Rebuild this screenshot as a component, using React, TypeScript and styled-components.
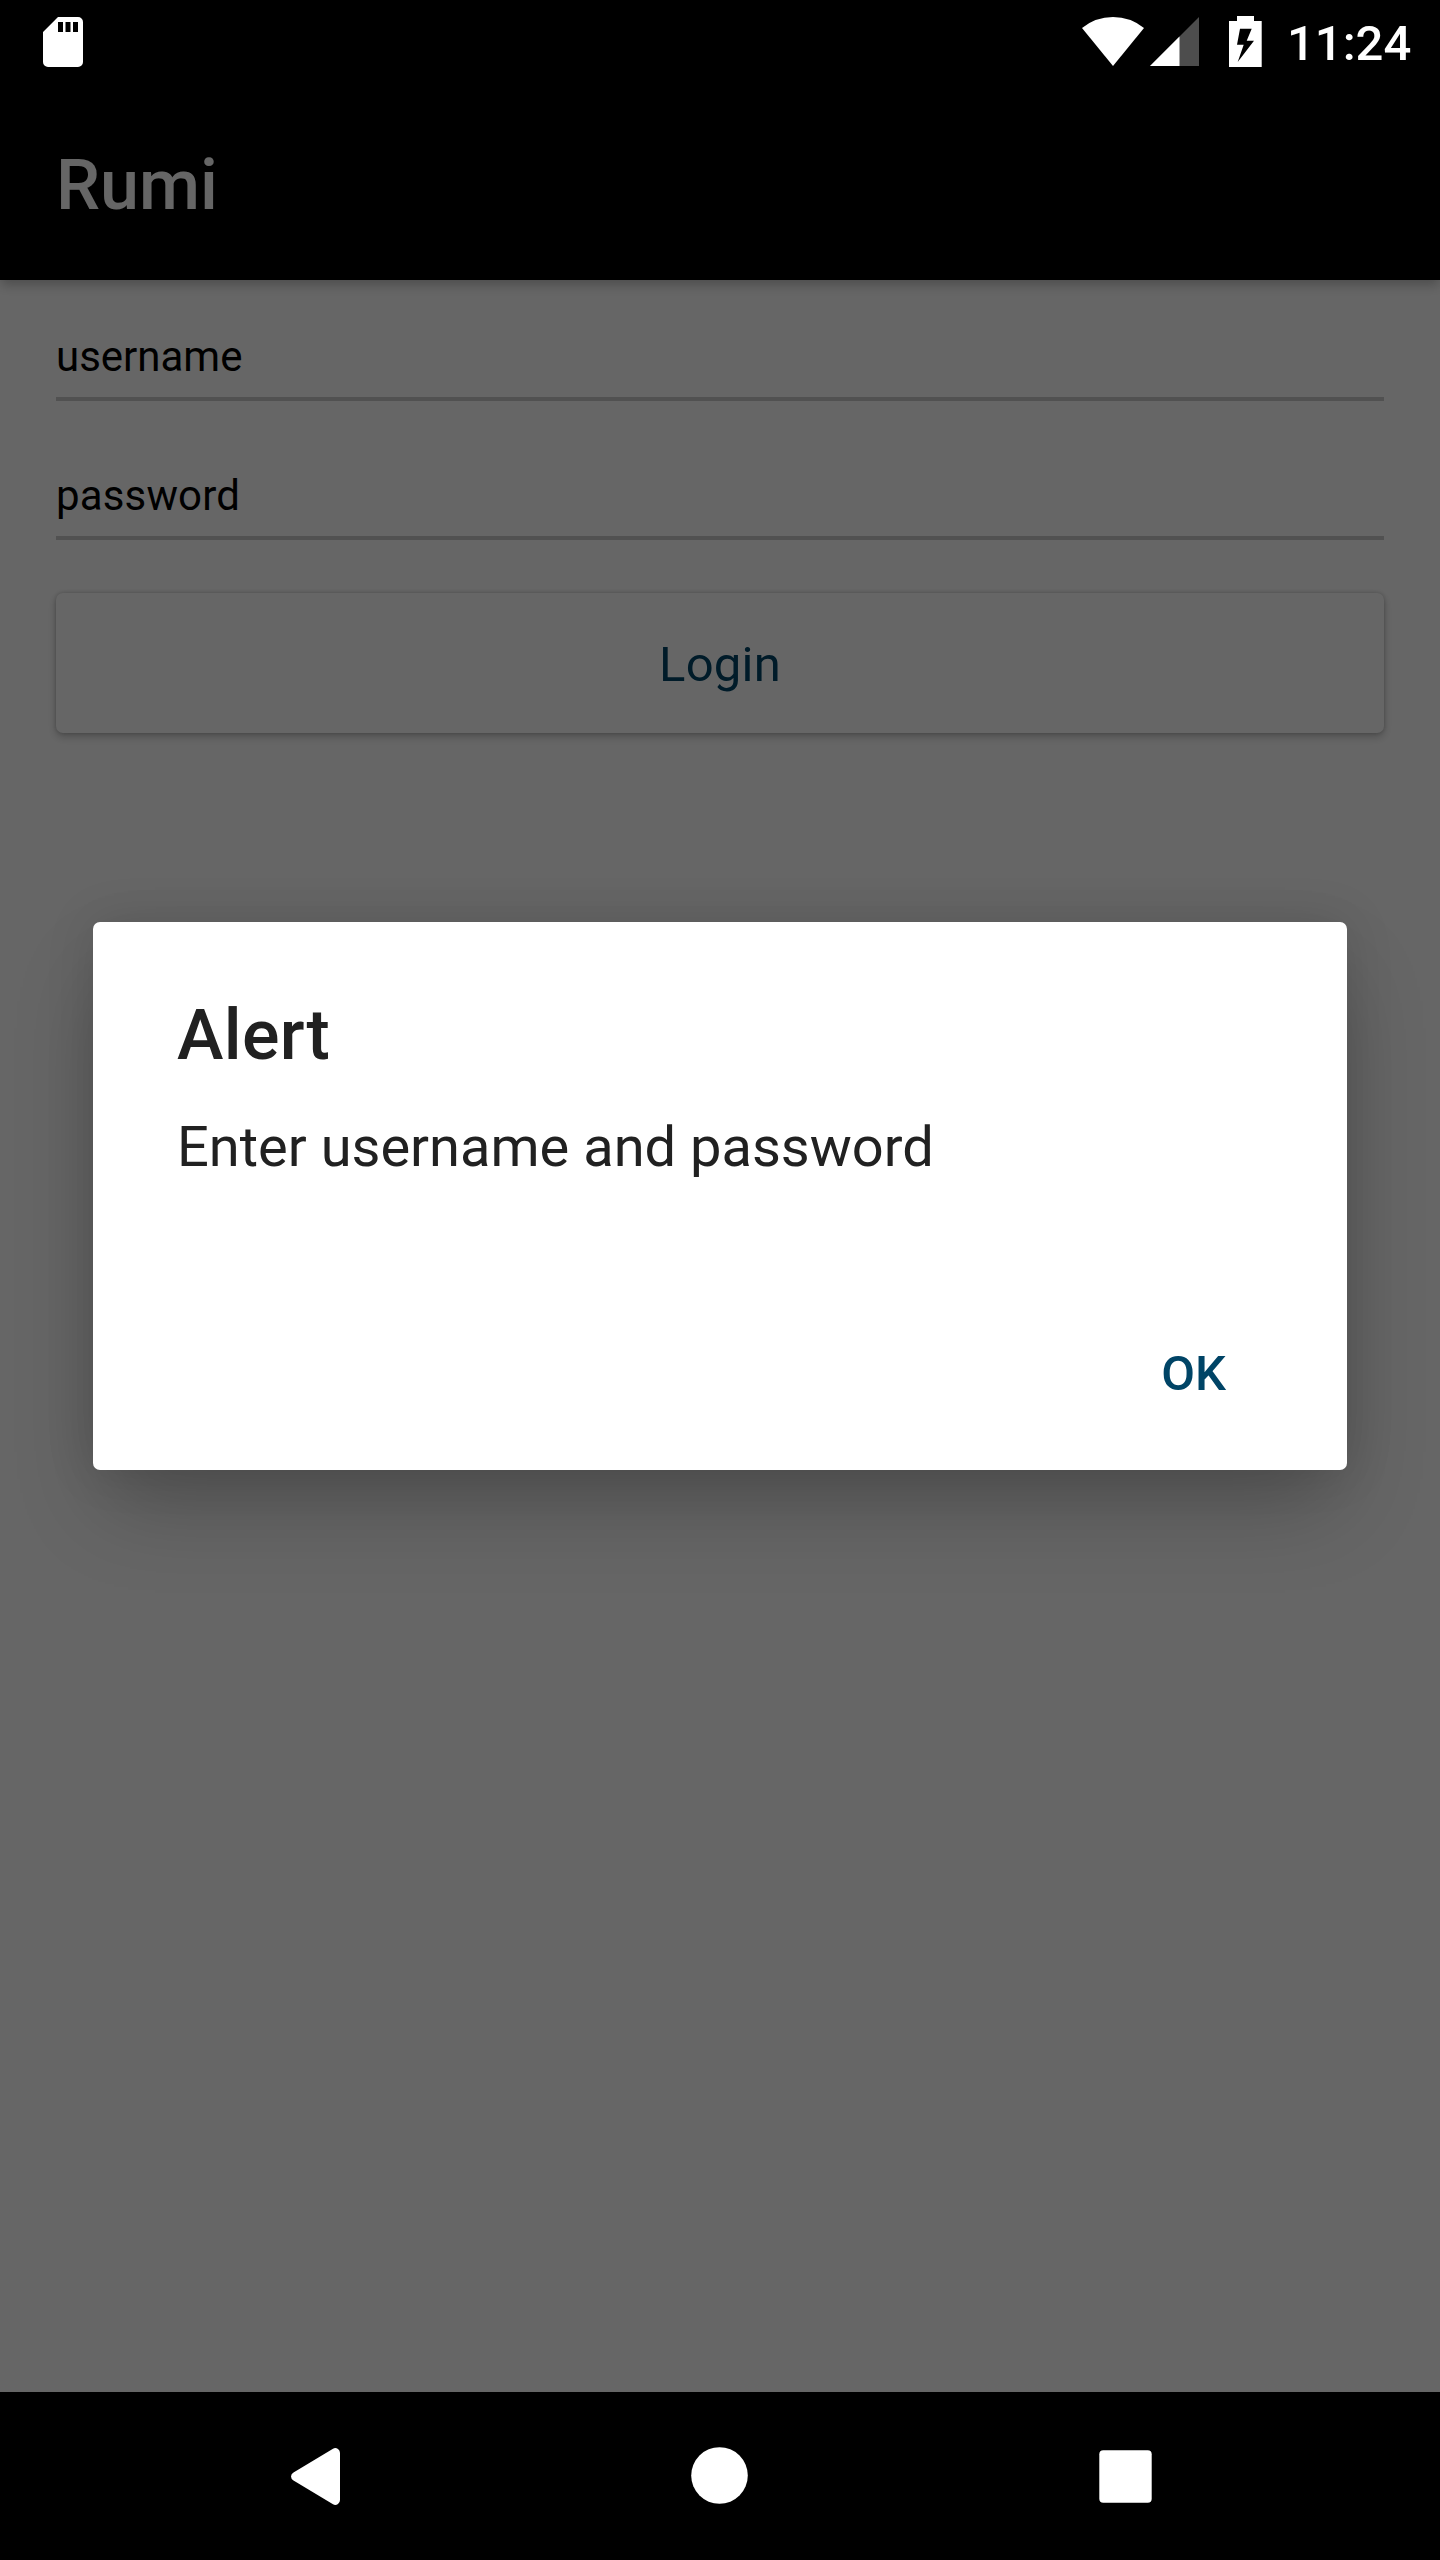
import React from "react";
import styled, { createGlobalStyle } from "styled-components";

const GlobalStyle = createGlobalStyle`
  * { box-sizing: border-box; }
  body {
    margin: 0;
    background: #000;
    font-family: Roboto, "Noto Sans", sans-serif;
  }
`;

const Screen = styled.div`
  display: flex;
  flex-direction: column;
  width: 1440px;
  height: 2560px;
  overflow: hidden;
  background: #000;
`;

const StatusBar = styled.header`
  display: flex;
  flex: none;
  align-items: flex-start;
  height: 84px;
  padding-left: 43px;
  color: #fff;
`;

const StatusIcon = styled.svg<{ $gap?: number }>`
  display: block;
  flex: none;
  height: 84px;
  margin-left: ${(p) => p.$gap ?? 0}px;
`;

const StatusIcons = styled.div`
  display: flex;
  width: 180px;
  margin-left: auto;
`;

const Clock = styled.time`
  width: 153px;
  margin-left: 25px;
  padding-top: 15px;
  font-size: 49px;
  font-weight: 500;
  line-height: 58px;
  white-space: nowrap;
`;

const Window = styled.main`
  position: relative;
  display: flex;
  flex: 1;
  flex-direction: column;
  overflow: hidden;
  background: #fff;
`;

const Toolbar = styled.div`
  display: flex;
  flex: none;
  align-items: center;
  height: 196px;
  padding: 6px 56px 0;
  background: #000;
  box-shadow: 0 6px 11px -1px rgba(0, 0, 0, 0.25);
`;

const ToolbarTitle = styled.h1`
  margin: 0;
  color: #fff;
  font-size: 70px;
  font-weight: 500;
  line-height: 82px;
`;

const Form = styled.section`
  display: flex;
  flex-direction: column;
  gap: 70px;
  padding: 52px 56px 0;
`;

const Field = styled.div<{ $tracking?: number }>`
  height: 69px;
  border-bottom: 4px solid #cbcbcb;
  color: #000;
  font-size: 42px;
  letter-spacing: ${(p) => p.$tracking ?? 0}px;
  line-height: 50px;
`;

const LoginButton = styled.button`
  height: 140px;
  margin: -17px 0 0;
  padding: 4px 0 0;
  border: 0;
  border-radius: 7px;
  background: #fff;
  box-shadow: 0 4px 8px rgba(0, 0, 0, 0.22), 0 0 4px rgba(0, 0, 0, 0.2);
  color: #004466;
  font: 400 49px/58px Roboto, "Noto Sans", sans-serif;
  letter-spacing: 0.2px;
`;

const Scrim = styled.div`
  position: absolute;
  inset: 0;
  display: flex;
  align-items: flex-start;
  justify-content: center;
  padding-top: 838px;
  background: rgba(0, 0, 0, 0.6);
`;

const Dialog = styled.div`
  display: flex;
  flex-direction: column;
  width: 1254px;
  height: 548px;
  padding: 72px 84px 67px;
  border-radius: 7px;
  background: #fff;
  box-shadow: 0 44px 84px -12px rgba(0, 0, 0, 0.24), 0 0 50px rgba(0, 0, 0, 0.12);
  color: #212121;
`;

const DialogTitle = styled.h2`
  margin: 0 0 38px;
  font-size: 70px;
  font-weight: 500;
  letter-spacing: 0.35px;
  line-height: 82px;
`;

const DialogMessage = styled.p`
  margin: 0;
  font-size: 56px;
  line-height: 66px;
`;

const DialogAction = styled.button`
  align-self: flex-end;
  margin: auto 37px 0 0;
  padding: 0;
  border: 0;
  background: none;
  color: #004466;
  font: 500 49px/58px Roboto, "Noto Sans", sans-serif;
`;

const NavBar = styled.nav`
  display: flex;
  flex: none;
  height: 168px;
  padding: 54px 0 0 291px;
`;

const NavIcon = styled.svg<{ $gap?: number }>`
  display: block;
  flex: none;
  height: 60px;
  margin-left: ${(p) => p.$gap ?? 0}px;
  fill: #fff;
`;

export default function App() {
  return (
    <>
      <GlobalStyle />
      <Screen>
        <StatusBar>
          <StatusIcon width="40" viewBox="0 0 40 84">
            <path
              fill="#fff"
              fillRule="evenodd"
              d="M15 17H35a5 5 0 0 1 5 5V62a5 5 0 0 1-5 5H5a5 5 0 0 1-5-5V32ZM15 22v10h5V22ZM22.5 22v10h5V22ZM30 22v10h5V22Z"
            />
          </StatusIcon>
          <StatusIcons>
            <StatusIcon width="62" viewBox="0 0 62 84">
              <path fill="#fff" d="M31 66 0 28Q13.500 17 31 17T62 28Z" />
            </StatusIcon>
            <StatusIcon $gap={6} width="49" viewBox="0 0 49 84">
              <path fill="#4d4d4d" d="M0 66H49V17Z" />
              <path fill="#fff" d="M0 66H29.500V36.500Z" />
            </StatusIcon>
            <StatusIcon $gap={30} width="33" viewBox="0 0 33 84">
              <path
                fill="#fff"
                fillRule="evenodd"
                d="M8 16H25V21H32.700V67H0V21H8ZM11 28.700 8 44.700H14.700L8.700 62 25 40.700H17.700L22.700 28.700Z"
              />
            </StatusIcon>
          </StatusIcons>
          <Clock>11:24</Clock>
        </StatusBar>
        <Window>
          <Toolbar>
            <ToolbarTitle>Rumi</ToolbarTitle>
          </Toolbar>
          <Form>
            <Field>username</Field>
            <Field $tracking={0.15}>password</Field>
            <LoginButton>Login</LoginButton>
          </Form>
          <Scrim>
            <Dialog role="alertdialog">
              <DialogTitle>Alert</DialogTitle>
              <DialogMessage>Enter username and password</DialogMessage>
              <DialogAction>OK</DialogAction>
            </Dialog>
          </Scrim>
        </Window>
        <NavBar>
          <NavIcon width="49" viewBox="0 0 49 60">
            <path d="M2.500 26.500 42 2.700Q44.500 1.300 47 3Q49 4.500 49 7V54Q49 56.500 47 58Q44.500 59.700 42 58.300L2.500 34.500Q0 33 0 30.500T2.500 26.500Z" />
          </NavIcon>
          <NavIcon $gap={351} width="57" viewBox="0 0 57 60">
            <circle cx="28.500" cy="29.500" r="28.300" />
          </NavIcon>
          <NavIcon $gap={351} width="53" viewBox="0 0 53 60">
            <rect x="0.300" y="4.300" width="52.400" height="52.400" rx="4" />
          </NavIcon>
        </NavBar>
      </Screen>
    </>
  );
}
